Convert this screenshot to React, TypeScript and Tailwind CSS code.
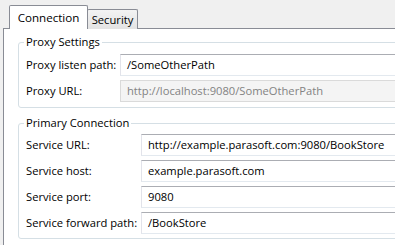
import React from "react";

const font = { fontFamily: '"Open Sans", "Noto Sans", Arial, sans-serif' };

function Field({ label, value, labelW, disabled }: { label: string; value: string; labelW: string; disabled?: boolean }) {
  return (
    <div className="flex items-center h-[22px]">
      <div className={`${labelW} shrink-0 whitespace-nowrap`}>{label}</div>
      <div
        className={
          disabled
            ? "flex-1 h-[22px] flex items-center pl-[6px] bg-[#f4f4f4] border border-[#dadada] text-[#838383] whitespace-nowrap overflow-hidden"
            : "flex-1 h-[22px] flex items-center pl-[6px] bg-white border border-[#e3e9ef] border-t-[#abadb3] border-l-[#e2e3ea] whitespace-nowrap overflow-hidden"
        }
      >
        {value}
      </div>
    </div>
  );
}

export default function App() {
  return (
    <div className="w-[395px] h-[245px] overflow-hidden bg-[#f0f0f0] text-[11.2px] leading-[16px] text-black" style={font}>
      <div className="flex items-end pl-[9px] pt-[5px] h-[29px]">
        <div className="relative z-10 w-[79px] h-[24px] pt-[1px] bg-white border border-b-0 border-[#898c95] rounded-t-[2px] flex items-center justify-center text-[11.6px]">
          Connection
        </div>
        <div className="-ml-px w-[51px] h-[20px] border border-b-0 border-[#898c95] rounded-t-[2px] bg-gradient-to-b from-[#f3f3f3] to-[#e3e3e3] flex items-center justify-center">
          Security
        </div>
      </div>
      <div className="ml-[3px] -mt-px w-[440px] h-[240px] bg-white border border-[#898c95]">
        <fieldset className="ml-[14px] mt-[5px] border border-[#d5dfe5] rounded-[3px] px-[7px] pb-[5px]">
          <legend className="px-[2px] -ml-[2px]">Proxy Settings</legend>
          <div className="flex flex-col gap-[4px] pt-[4px]">
            <Field label="Proxy listen path:" value="/SomeOtherPath" labelW="w-[94px]" />
            <Field label="Proxy URL:" value="http://localhost:9080/SomeOtherPath" labelW="w-[94px]" disabled />
          </div>
        </fieldset>
        <fieldset className="ml-[14px] mt-[7px] border border-[#d5dfe5] rounded-[3px] px-[7px] pb-[4px]">
          <legend className="px-[2px] -ml-[2px]">Primary Connection</legend>
          <div className="flex flex-col gap-[4px] pt-[3px]">
            <Field label="Service URL:" value="http://example.parasoft.com:9080/BookStore" labelW="w-[115px]" />
            <Field label="Service host:" value="example.parasoft.com" labelW="w-[115px]" />
            <Field label="Service port:" value="9080" labelW="w-[115px]" />
            <Field label="Service forward path:" value="/BookStore" labelW="w-[115px]" />
          </div>
        </fieldset>
      </div>
    </div>
  );
}
